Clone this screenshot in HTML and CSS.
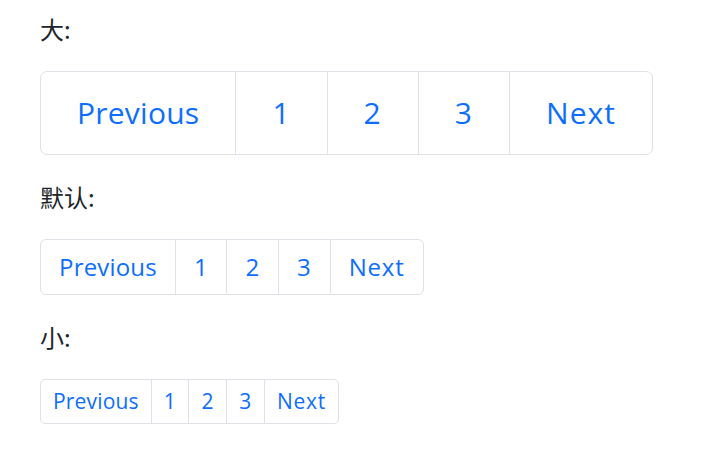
FILE: index.html
```html
<!DOCTYPE html>
<html lang="zh">
<head>
<meta charset="utf-8">
<link rel="stylesheet" href="styles.css">
</head>
<body>
<p class="label">大:</p>
<ul class="pagination pagination-lg">
  <li class="page-item"><a class="page-link" href="#">Previous</a></li>
  <li class="page-item"><a class="page-link wide" href="#">1</a></li>
  <li class="page-item"><a class="page-link wide" href="#">2</a></li>
  <li class="page-item"><a class="page-link wide" href="#">3</a></li>
  <li class="page-item"><a class="page-link wide" href="#">Next</a></li>
</ul>
<p class="label">默认:</p>
<ul class="pagination">
  <li class="page-item"><a class="page-link" href="#">Previous</a></li>
  <li class="page-item"><a class="page-link wide" href="#">1</a></li>
  <li class="page-item"><a class="page-link wide" href="#">2</a></li>
  <li class="page-item"><a class="page-link wide" href="#">3</a></li>
  <li class="page-item"><a class="page-link wide" href="#">Next</a></li>
</ul>
<p class="label">小:</p>
<ul class="pagination pagination-sm">
  <li class="page-item"><a class="page-link" href="#">Previous</a></li>
  <li class="page-item"><a class="page-link wide" href="#">1</a></li>
  <li class="page-item"><a class="page-link wide" href="#">2</a></li>
  <li class="page-item"><a class="page-link wide" href="#">3</a></li>
  <li class="page-item"><a class="page-link wide" href="#">Next</a></li>
</ul>
</body>
</html>
```
FILE: styles.css
```css
html, body {
  margin: 0;
  background: #fff;
}
body {
  padding: 11px 40px;
  font-family: "Open Sans", "Noto Sans CJK SC", sans-serif;
  font-size: 24px;
  line-height: 36px;
  color: #212529;
}
.label {
  margin: 0 0 24px;
  font-family: "Noto Sans CJK SC", sans-serif;
}
.pagination {
  display: flex;
  list-style: none;
  padding: 0;
  margin: 0 0 24px;
}
.page-item + .page-item {
  margin-left: -1px;
}
.page-link {
  display: block;
  padding: 9px 18px;
  font-size: 24px;
  line-height: 36px;
  letter-spacing: 0.008em;
  color: #0d6efd;
  text-decoration: none;
  background: #fff;
  border: 1px solid #dee2e6;
}
.page-link.wide {
  letter-spacing: 0.035em;
}
.page-item:first-child .page-link {
  border-radius: 6px 0 0 6px;
}
.page-item:last-child .page-link {
  border-radius: 0 6px 6px 0;
}
.pagination-lg .page-link {
  padding: 18px 36px;
  font-size: 30px;
  line-height: 46px;
}
.pagination-lg .page-item:first-child .page-link {
  border-radius: 7px 0 0 7px;
}
.pagination-lg .page-item:last-child .page-link {
  border-radius: 0 7px 7px 0;
}
.pagination-sm .page-link {
  padding: 6px 12px;
  font-size: 21px;
  line-height: 31px;
}
.pagination-sm .page-item:first-child .page-link {
  border-radius: 5px 0 0 5px;
}
.pagination-sm .page-item:last-child .page-link {
  border-radius: 0 5px 5px 0;
}
```
